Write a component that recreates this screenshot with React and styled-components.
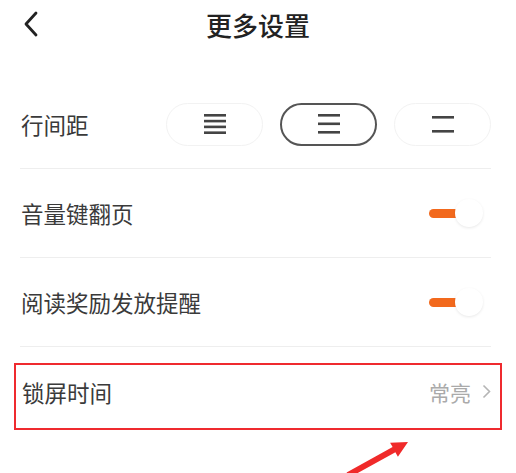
import styled, { createGlobalStyle } from "styled-components";

const GlobalStyle = createGlobalStyle`
  html, body {
    margin: 0;
    padding: 0;
    background: #fff;
  }
  body {
    font-family: "Noto Sans CJK SC", "Noto Sans", sans-serif;
    color: #333;
  }
`;

const Page = styled.div`
  position: relative;
  width: 516px;
  height: 473px;
  overflow: hidden;
  background: #fff;
`;

const Header = styled.div`
  position: relative;
  height: 50px;
  display: flex;
  align-items: center;
  justify-content: center;
`;

const BackButton = styled.button`
  position: absolute;
  left: 18px;
  top: 9px;
  width: 26px;
  height: 30px;
  padding: 0;
  border: none;
  background: none;
  display: flex;
  align-items: center;
  justify-content: center;
`;

const Title = styled.h1`
  margin: 0;
  font-size: 26px;
  font-weight: 500;
  color: #222;
  line-height: 1;
`;

const List = styled.div`
  padding: 30px 25px 0 20px;
`;

const Row = styled.div`
  height: 88px;
  display: flex;
  align-items: center;
  justify-content: space-between;
  border-bottom: 1px solid #eeeeee;
`;

const Label = styled.span`
  font-size: 22.5px;
  color: #3a3a3a;
  padding-left: 1px;
`;

const PillGroup = styled.div`
  display: flex;
  gap: 17px;
`;

const Pill = styled.button`
  width: 97px;
  height: 43px;
  box-sizing: border-box;
  border-radius: 22px;
  border: ${(p) => (p.$active ? "2px solid #555" : "1.5px solid #f2f2f2")};
  background: #fff;
  display: flex;
  align-items: center;
  justify-content: center;
  padding: 0;
`;

const Toggle = styled.div`
  position: relative;
  width: 56px;
  height: 30px;
  margin-right: 8px;
  display: flex;
  align-items: center;
`;

const Track = styled.div`
  width: 30px;
  height: 9px;
  margin-left: 2px;
  border-radius: 5px 0 0 5px;
  background: #f2691d;
`;

const Knob = styled.div`
  position: absolute;
  right: 0;
  top: 1px;
  width: 28px;
  height: 28px;
  border-radius: 50%;
  background: #fff;
  box-shadow: 0 1px 3px rgba(0, 0, 0, 0.09);
`;

const LockRow = styled.div`
  margin: 16px 0 0 14px;
  width: 488px;
  height: 67px;
  box-sizing: border-box;
  border: 2px solid #ef2a2f;
  display: flex;
  align-items: center;
  justify-content: space-between;
  padding: 0 9px 10px 5px;
`;

const Value = styled.span`
  display: flex;
  align-items: center;
  gap: 11px;
  font-size: 21px;
  color: #aaa;
`;

const Pointer = styled.svg`
  position: absolute;
  left: 330px;
  top: 430px;
`;

function LinesIcon({ count, gap }) {
  const h = (count - 1) * gap + 3;
  return (
    <svg width="24" height={h} viewBox={`0 0 24 ${h}`}>
      {Array.from({ length: count }).map((_, i) => (
        <rect key={i} x="1" y={i * gap} width="22" height="2.6" fill="#444" />
      ))}
    </svg>
  );
}

function Switch() {
  return (
    <Toggle>
      <Track />
      <Knob />
    </Toggle>
  );
}

export default function App() {
  return (
    <Page>
      <GlobalStyle />
      <Header>
        <BackButton>
          <svg width="16" height="26" viewBox="0 0 16 26">
            <path
              d="M13 2 L3 13 L13 24"
              fill="none"
              stroke="#222"
              strokeWidth="2.8"
              strokeLinecap="round"
              strokeLinejoin="round"
            />
          </svg>
        </BackButton>
        <Title>更多设置</Title>
      </Header>
      <List>
        <Row>
          <Label>行间距</Label>
          <PillGroup>
            <Pill>
              <LinesIcon count={4} gap={5.8} />
            </Pill>
            <Pill $active>
              <LinesIcon count={3} gap={8.5} />
            </Pill>
            <Pill>
              <LinesIcon count={2} gap={14} />
            </Pill>
          </PillGroup>
        </Row>
        <Row>
          <Label>音量键翻页</Label>
          <Switch />
        </Row>
        <Row>
          <Label>阅读奖励发放提醒</Label>
          <Switch />
        </Row>
      </List>
      <LockRow>
        <Label>锁屏时间</Label>
        <Value>
          常亮
          <svg width="9" height="15" viewBox="0 0 9 15">
            <path
              d="M1.5 1.5 L7.5 7.5 L1.5 13.5"
              fill="none"
              stroke="#b5b5b5"
              strokeWidth="1.6"
            />
          </svg>
        </Value>
      </LockRow>
      <Pointer width="90" height="43" viewBox="0 0 90 43">
        <polygon
          points="78,12 67.9,26.7 65.4,22.3 19.4,47.6 16.6,42.4 62.6,17.1 60.1,12.7"
          fill="#f02a2a"
        />
      </Pointer>
    </Page>
  );
}
